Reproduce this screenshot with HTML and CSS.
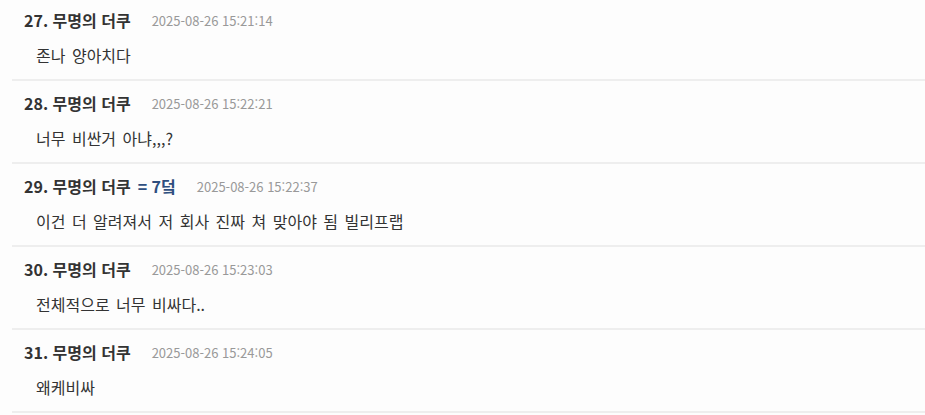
FILE: index.html
```html
<!DOCTYPE html>
<html lang="ko">
	<head>
		<meta charset="UTF-8">
		<meta name="viewport" content="width=device-width, initial-scale=1.0">
		<title>댓글</title>
		<link rel="stylesheet" href="styles.css">
	</head>
	<body>
		<!-- 댓글 목록 -->
		<ul class="comments">
			<li class="comment">
				<div class="meta">
					<span class="name">27. 무명의 더쿠</span>
					<span class="date">2025-08-26 15:21:14</span>
				</div>
				<div class="text">존나 양아치다</div>
			</li>
			<li class="comment">
				<div class="meta">
					<span class="name">28. 무명의 더쿠</span>
					<span class="date">2025-08-26 15:22:21</span>
				</div>
				<div class="text">너무 비싼거 아냐,,,?</div>
			</li>
			<li class="comment">
				<div class="meta">
					<span class="name">29. 무명의 더쿠</span>
					<span class="reply">= 7덬</span>
					<span class="date">2025-08-26 15:22:37</span>
				</div>
				<div class="text">이건 더 알려져서 저 회사 진짜 쳐 맞아야 됨 빌리프랩</div>
			</li>
			<li class="comment">
				<div class="meta">
					<span class="name">30. 무명의 더쿠</span>
					<span class="date">2025-08-26 15:23:03</span>
				</div>
				<div class="text">전체적으로 너무 비싸다..</div>
			</li>
			<li class="comment">
				<div class="meta">
					<span class="name">31. 무명의 더쿠</span>
					<span class="date">2025-08-26 15:24:05</span>
				</div>
				<div class="text">왜케비싸</div>
			</li>
		</ul>
	</body>
</html>
```

FILE: styles.css
```css
* {
	margin: 0;
	padding: 0;
}

body {
	background: #fdfdfd;
	font-family: "Noto Sans CJK KR", "Noto Sans", sans-serif;
	color: #333;
}

.comments {
	list-style: none;
	margin: -2px 0 0 12px;
}

.comment {
	padding: 12px 0 14px;
	border-bottom: 2px solid #eeeeee;
}

.meta {
	display: flex;
	align-items: center;
	height: 20px;
	padding-left: 12px;
}

.name {
	font-size: 16px;
	font-weight: bold;
	color: #333;
}

/* 답글 대상 */
.reply {
	margin-left: 7px;
	font-size: 16px;
	font-weight: bold;
	color: #2f4f7f;
}

.date {
	margin-left: 21px;
	font-size: 13px;
	color: #999;
}

.text {
	margin-top: 15px;
	padding-left: 24px;
	font-size: 16px;
	line-height: 20px;
	word-spacing: 2px;
	color: #333;
}
```
